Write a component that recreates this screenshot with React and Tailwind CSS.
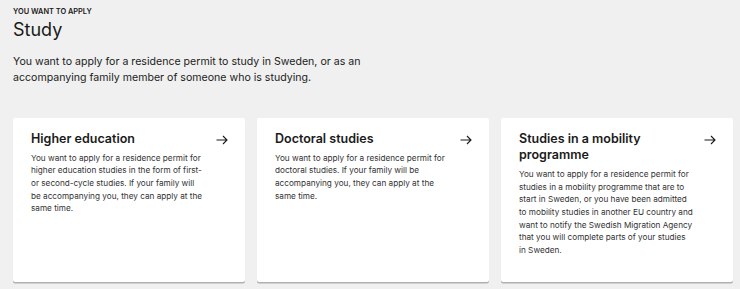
import React from 'react';

const cards = [
  {
    title: 'Higher education',
    text: 'You want to apply for a residence permit for higher education studies in the form of first- or second-cycle studies. If your family will\nbe accompanying you, they can apply at the same time.',
  },
  {
    title: 'Doctoral studies',
    text: 'You want to apply for a residence permit for doctoral studies. If your family will be accompanying you, they can apply at the same time.',
  },
  {
    title: 'Studies in a mobility programme',
    text: 'You want to apply for a residence permit for studies in a mobility programme that are to start in Sweden, or you have been admitted to mobility studies in another EU country and want to notify the Swedish Migration Agency that you will complete parts of your studies\nin Sweden.',
  },
];

function Arrow() {
  return (
    <svg width="12" height="10" viewBox="0 0 12 10" fill="none" stroke="#1a1a1a" strokeWidth="1.1" className="shrink-0 mt-[4px]">
      <path d="M0.5 5h10.5M7 1l4 4-4 4" />
    </svg>
  );
}

export default function App() {
  return (
    <div className="h-[289px] bg-[#f0f0f0] px-[13px] pt-[6.5px] font-['Inter',sans-serif] text-[#1a1a1a] overflow-hidden">
      <p className="text-[7.4px] font-semibold uppercase leading-[10px]">You want to apply</p>
      <h1 className="mt-[2.5px] text-[18px] leading-[22px] font-normal">Study</h1>
      <p className="mt-[12.75px] text-[10.6px] leading-[16.5px] text-[#222] w-[352px]">
        You want to apply for a residence permit to study in Sweden, or as an accompanying family member of someone who is studying.
      </p>
      <div className="mt-[31px] grid grid-cols-3 gap-[12px] w-[720px]">
        {cards.map((c) => (
          <div key={c.title} className="h-[164px] bg-white rounded-[2px] shadow-[0_1.5px_0_#b0b0b0] pl-[18px] pr-[17px] pt-[13px] flex justify-between">
            <div className="w-[176px]">
              <h2 className="text-[12.5px] leading-[16.5px] font-semibold">{c.title}</h2>
              <p className="mt-[4.5px] text-[8.2px] leading-[12.6px] text-[#333] whitespace-pre-line">{c.text}</p>
            </div>
            <Arrow />
          </div>
        ))}
      </div>
    </div>
  );
}
